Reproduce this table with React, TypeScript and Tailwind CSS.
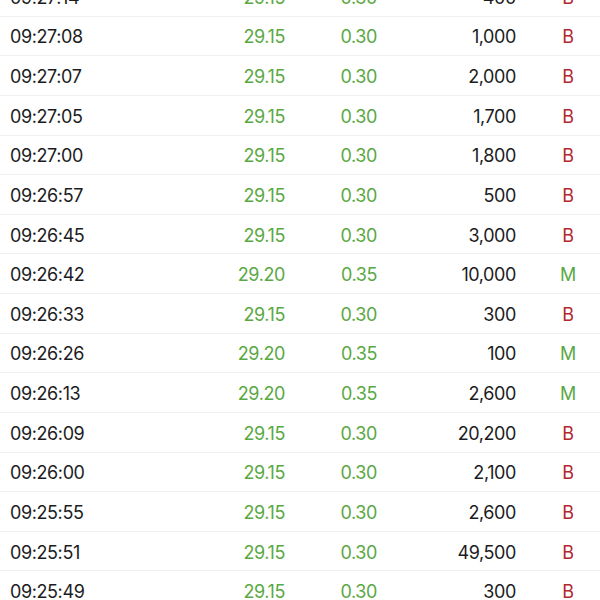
const green = 'text-[#5aa843]'
const red = 'text-[#b3282f]'

type Trade = {
  time: string
  price: string
  change: string
  volume: string
  side: 'B' | 'M'
}

const trades: Trade[] = [
  { time: '09:27:14', price: '29.15', change: '0.30', volume: '400', side: 'B' },
  { time: '09:27:08', price: '29.15', change: '0.30', volume: '1,000', side: 'B' },
  { time: '09:27:07', price: '29.15', change: '0.30', volume: '2,000', side: 'B' },
  { time: '09:27:05', price: '29.15', change: '0.30', volume: '1,700', side: 'B' },
  { time: '09:27:00', price: '29.15', change: '0.30', volume: '1,800', side: 'B' },
  { time: '09:26:57', price: '29.15', change: '0.30', volume: '500', side: 'B' },
  { time: '09:26:45', price: '29.15', change: '0.30', volume: '3,000', side: 'B' },
  { time: '09:26:42', price: '29.20', change: '0.35', volume: '10,000', side: 'M' },
  { time: '09:26:33', price: '29.15', change: '0.30', volume: '300', side: 'B' },
  { time: '09:26:26', price: '29.20', change: '0.35', volume: '100', side: 'M' },
  { time: '09:26:13', price: '29.20', change: '0.35', volume: '2,600', side: 'M' },
  { time: '09:26:09', price: '29.15', change: '0.30', volume: '20,200', side: 'B' },
  { time: '09:26:00', price: '29.15', change: '0.30', volume: '2,100', side: 'B' },
  { time: '09:25:55', price: '29.15', change: '0.30', volume: '2,600', side: 'B' },
  { time: '09:25:51', price: '29.15', change: '0.30', volume: '49,500', side: 'B' },
  { time: '09:25:49', price: '29.15', change: '0.30', volume: '300', side: 'B' },
]

function TradeRow({ trade }: { trade: Trade }) {
  return (
    <li className="grid h-[39.63px] grid-cols-[200px_85px_92px_139px_1fr] items-center border-b border-[#efefef] pt-[3px] text-[18px] leading-none tracking-[-0.4px]">
      <span className="pl-[10px] text-[#1c1c1e]">{trade.time}</span>
      <span className={`text-right ${green}`}>{trade.price}</span>
      <span className={`text-right ${green}`}>{trade.change}</span>
      <span className="text-right text-[#1c1c1e]">{trade.volume}</span>
      <span className={`pl-[20px] text-center ${trade.side === 'B' ? red : green}`}>
        {trade.side}
      </span>
    </li>
  )
}

export default function App() {
  return (
    <div className="h-[600px] w-[600px] overflow-hidden bg-white font-['Inter','Noto_Sans',sans-serif]">
      <ul className="-mt-[23px]">
        {trades.map((t) => (
          <TradeRow key={t.time} trade={t} />
        ))}
      </ul>
    </div>
  )
}
